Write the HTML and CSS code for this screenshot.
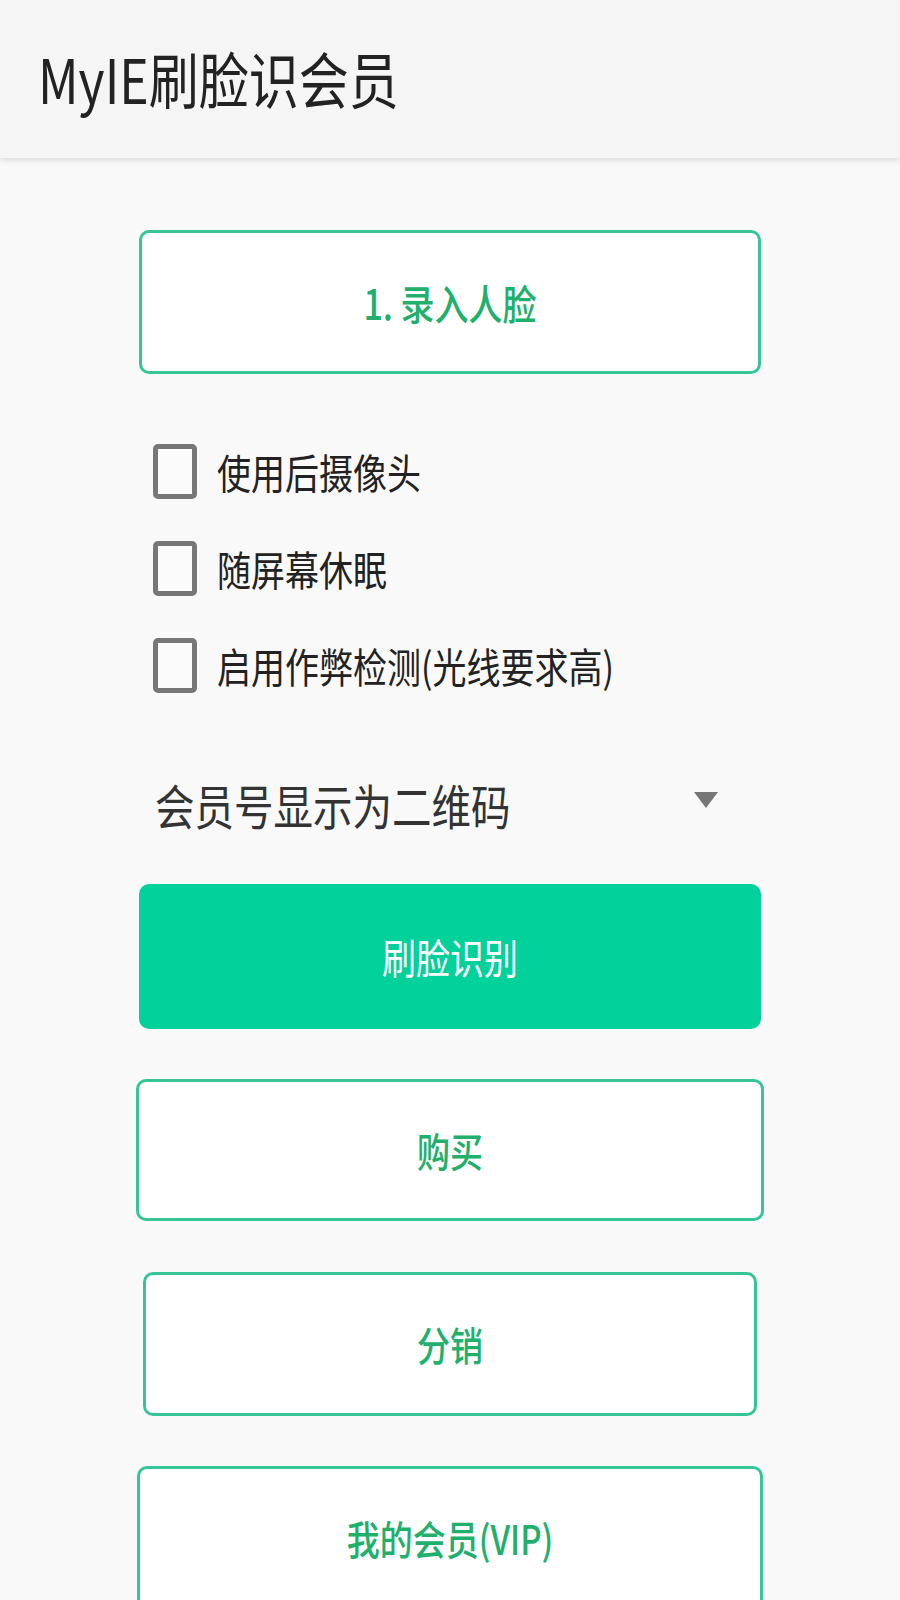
FILE: index.html
```html
<!DOCTYPE html>
<html lang="zh-CN">
<head>
<meta charset="utf-8">
<title>MyIE刷脸识会员</title>
<link rel="stylesheet" href="styles.css">
</head>
<body>
<header class="appbar">
  <h1 class="title"><span class="tx">MyIE刷脸识会员</span></h1>
</header>
<main class="content">
  <button class="btn btn-outline btn-first"><span class="tx">1. 录入人脸</span></button>

  <div class="options">
    <label class="check-row"><span class="box"></span><span class="tx label">使用后摄像头</span></label>
    <label class="check-row"><span class="box"></span><span class="tx label">随屏幕休眠</span></label>
    <label class="check-row"><span class="box"></span><span class="tx label">启用作弊检测(光线要求高)</span></label>
  </div>

  <div class="select">
    <span class="tx select-text">会员号显示为二维码</span>
    <span class="caret"></span>
  </div>

  <button class="btn btn-primary"><span class="tx">刷脸识别</span></button>
  <button class="btn btn-outline btn-buy"><span class="tx">购买</span></button>
  <button class="btn btn-outline btn-dist"><span class="tx">分销</span></button>
  <button class="btn btn-outline btn-vip"><span class="tx">我的会员(VIP)</span></button>
</main>
</body>
</html>
```

FILE: styles.css
```css
html, body {
  margin: 0;
  padding: 0;
}

body {
  width: 900px;
  min-height: 1600px;
  background: #f9f9f9;
  font-family: "Noto Sans CJK SC", "Noto Sans", sans-serif;
  overflow: hidden;
}

.tx {
  display: inline-block;
  transform: scaleY(1.22);
}

.appbar {
  height: 158px;
  background: #f5f5f5;
  box-shadow: 0 2px 6px rgba(0, 0, 0, 0.13);
  display: flex;
  align-items: center;
  padding-left: 38px;
  box-sizing: border-box;
  position: relative;
  z-index: 1;
}

.title {
  margin: 0;
  font-size: 50px;
  font-weight: 400;
  color: #222;
  line-height: 1;
  margin-top: -4px;
}

.content {
  width: 622px;
  margin: 0 auto;
  padding-top: 72px;
  display: flex;
  flex-direction: column;
  align-items: center;
}

.btn {
  width: 622px;
  height: 144px;
  border-radius: 10px;
  font-family: inherit;
  font-size: 33px;
  display: flex;
  align-items: center;
  justify-content: center;
  padding: 0;
  box-sizing: border-box;
  cursor: pointer;
}

.btn-outline {
  background: #ffffff;
  border: 3px solid #35c597;
  color: #21b06c;
  font-weight: 500;
}

.btn-first {
  font-size: 34px;
}

.btn-primary {
  margin-top: 31px;
  height: 145px;
  background: #02d19b;
  border: none;
  color: #ffffff;
  font-size: 34px;
  font-weight: 400;
}

.btn-buy {
  width: 628px;
  height: 142px;
  margin-top: 50px;
}

.btn-dist {
  width: 614px;
  margin-top: 51px;
}

.btn-vip {
  width: 626px;
  margin-top: 50px;
}

.options {
  align-self: stretch;
  margin-top: 49px;
  display: flex;
  flex-direction: column;
}

.check-row {
  height: 97px;
  display: flex;
  align-items: center;
  padding-left: 14px;
  gap: 20px;
}

.box {
  width: 44px;
  height: 55px;
  box-sizing: border-box;
  border: 5px solid #777777;
  border-radius: 5px;
  background: #fbfbfb;
  flex: none;
}

.label {
  font-size: 34px;
  color: #222;
}

.select {
  align-self: stretch;
  margin-top: 39px;
  height: 100px;
  display: flex;
  align-items: center;
  justify-content: space-between;
  padding: 0 43px 0 16px;
}

.select-text {
  font-size: 39.5px;
  color: #333;
}

.caret {
  width: 0;
  height: 0;
  border-left: 12.5px solid transparent;
  border-right: 12.5px solid transparent;
  border-top: 16px solid #777777;
  margin-top: -6px;
}
```
